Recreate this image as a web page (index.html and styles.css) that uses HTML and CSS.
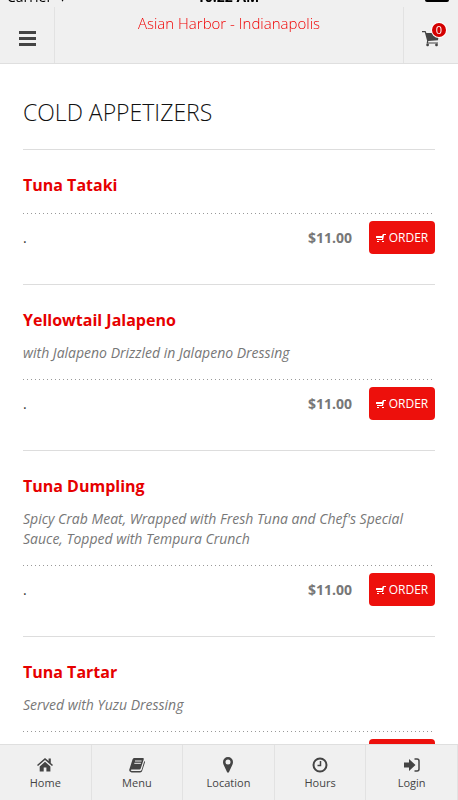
FILE: index.html
```html
<!DOCTYPE html>
<html lang="en">
<head>
    <meta charset="UTF-8">
    <meta name="viewport" content="width=device-width, initial-scale=1.0">
    <title>Asian Harbor - Indianapolis</title>
    <link rel="stylesheet" href="styles.css">
</head>
<body>
    <!-- Shared icon shapes -->
    <svg class="sprite" aria-hidden="true">
        <symbol id="icon-order" viewBox="0 0 10 10">
            <path d="M0 3h6.500L7 1h3v1H8L7 7H1V6h5V5H.5z"/>
            <path d="M.5 3.500v1.500M7 1.500 6.500 6.500" class="icon-line icon-thin"/>
            <rect x="1" y="8" width="2" height="1"/>
            <rect x="6" y="8" width="2" height="1"/>
        </symbol>
    </svg>

    <header class="top">
        <div class="status-bar">
            <span>Carrier &nbsp;▾</span>
            <strong>10:22 AM</strong>
            <span class="battery"></span>
        </div>
        <div class="header-bar">
            <button class="header-button menu-button" type="button" aria-label="Open menu">
                <svg width="17" height="16" viewBox="0 0 17 16"><path d="M0 1h17v3H0zM0 7h17v3H0zM0 13h17v3H0z"/></svg>
            </button>
            <h1 class="restaurant">Asian Harbor - Indianapolis</h1>
            <button class="header-button cart-button" type="button" aria-label="Cart">
                <span class="cart">
                    <svg width="18" height="17" viewBox="0 0 18 17">
                        <path d="M0 1h3.600l.8 2H17l-1 7.200L6.300 11l-.3 1.400h10v1.200H4.600l.5-2.800L2.800 2.300H0z"/>
                        <rect x="4.300" y="13.600" width="2.600" height="2.600" rx="1"/>
                        <rect x="13.200" y="13.600" width="2.600" height="2.600" rx="1"/>
                    </svg>
                    <span class="cart-count">0</span>
                </span>
            </button>
        </div>
    </header>

    <main class="content">
        <h2 class="category">COLD APPETIZERS</h2>

        <article class="item">
            <h3 class="item-name">Tuna Tataki</h3>
            <div class="item-row">
                <span class="item-size">.</span>
                <span class="item-price">$11.00</span>
                <button class="order-button" type="button"><svg width="10" height="10"><use href="#icon-order"/></svg>ORDER</button>
            </div>
        </article>

        <article class="item">
            <h3 class="item-name">Yellowtail Jalapeno</h3>
            <p class="item-description">with Jalapeno Drizzled in Jalapeno Dressing</p>
            <div class="item-row">
                <span class="item-size">.</span>
                <span class="item-price">$11.00</span>
                <button class="order-button" type="button"><svg width="10" height="10"><use href="#icon-order"/></svg>ORDER</button>
            </div>
        </article>

        <article class="item">
            <h3 class="item-name">Tuna Dumpling</h3>
            <p class="item-description">Spicy Crab Meat, Wrapped with Fresh Tuna and Chef's Special Sauce, Topped with Tempura Crunch</p>
            <div class="item-row">
                <span class="item-size">.</span>
                <span class="item-price">$11.00</span>
                <button class="order-button" type="button"><svg width="10" height="10"><use href="#icon-order"/></svg>ORDER</button>
            </div>
        </article>

        <article class="item">
            <h3 class="item-name">Tuna Tartar</h3>
            <p class="item-description">Served with Yuzu Dressing</p>
            <div class="item-row">
                <span class="item-size">.</span>
                <span class="item-price">$11.00</span>
                <button class="order-button" type="button"><svg width="10" height="10"><use href="#icon-order"/></svg>ORDER</button>
            </div>
        </article>
    </main>

    <nav class="tabs">
        <a class="tab" href="#home">
            <svg width="16" height="16" viewBox="0 0 16 16">
                <path d="M8 4.800 13.400 9.500v5h-4v-4H6.700v4h-4v-5z"/>
                <path d="M8 1 0 8l1 1.100 7-6 7 6L16 8l-2.200-2V1.500h-2.200V4z"/>
            </svg>
            Home
        </a>
        <a class="tab" href="#menu">
            <svg width="16" height="16" viewBox="0 0 16 16">
                <path d="M5.500 1h8.200c.9 0 1.300.6 1 1.400l-3 9.100c-.2.7-.8 1-1.500 1H3c-.8 0-1.300.3-1.200.8.1.4.5.6 1.100.6h8.500c.6 0 1-.3 1.200-.8L15.300 4c.6.3.8.8.6 1.500l-2.700 8.300c-.3.9-1.100 1.600-2.100 1.600H2.600C1 15.400-.1 14 .3 12.500L3.500 2.500C3.800 1.600 4.500 1 5.500 1z"/>
                <path d="M6 4h6.600M5.300 6.300h6.600" class="icon-gap"/>
            </svg>
            Menu
        </a>
        <a class="tab" href="#location">
            <svg width="16" height="16" viewBox="0 0 16 16">
                <path fill-rule="evenodd" d="M8 0a5 5 0 0 0-5 5c0 1 .2 1.700.5 2.400l3.500 7.700c.4.900 1.600.900 2 0l3.500-7.700c.3-.7.5-1.400.5-2.400a5 5 0 0 0-5-5zm0 2.500a2.500 2.500 0 1 1 0 5 2.500 2.500 0 0 1 0-5z"/>
            </svg>
            Location
        </a>
        <a class="tab" href="#hours">
            <svg width="16" height="16" viewBox="0 0 16 16">
                <circle cx="8" cy="8" r="6.500" class="icon-line icon-thick"/>
                <path d="M8.500 4v4.500H5.500" class="icon-line"/>
            </svg>
            Hours
        </a>
        <a class="tab" href="#login">
            <svg width="16" height="16" viewBox="0 0 16 16">
                <path d="M0 5.500h5V2l6.500 6L5 14v-3.500H0z"/>
                <path d="M10.500 2H13c1.200 0 2 .8 2 2v8c0 1.200-.8 2-2 2h-2.500" class="icon-line"/>
            </svg>
            Login
        </a>
    </nav>
</body>
</html>
```
FILE: styles.css
```css
* {
    box-sizing: border-box;
}

body {
    margin: 0;
    padding: 64px 0 56px;
    background: #fff;
    color: #333;
    font-family: "Open Sans", "Noto Sans", sans-serif;
    font-size: 14px;
    line-height: 20px;
}

button {
    border: 0;
    font: inherit;
    cursor: pointer;
}

svg {
    fill: currentColor;
}

.sprite {
    position: absolute;
    width: 0;
    height: 0;
}

/* Header */
.top {
    position: fixed;
    top: 0;
    left: 0;
    right: 0;
    z-index: 1;
    background: #f0f0f0;
    border-bottom: 1px solid #dfdfdf;
}

/* Pulled up so that it is mostly off screen */
.status-bar {
    display: grid;
    grid-template-columns: 1fr auto 1fr;
    align-items: start;
    height: 20px;
    margin-top: -13px;
    padding: 0 9px 0 7px;
    color: #000;
    font-size: 14px;
    line-height: 20px;
}

.battery {
    justify-self: end;
    width: 24px;
    height: 10px;
    margin-top: 5px;
    border-radius: 2px;
    background: #000;
}

.header-bar {
    display: flex;
    height: 56px;
}

.header-button {
    display: flex;
    align-items: center;
    justify-content: center;
    width: 55px;
    padding: 6px 0 0;
    background: none;
    color: #444;
}

.menu-button {
    border-right: 1px solid #e2e2e2;
}

.cart-button {
    border-left: 1px solid #e2e2e2;
}

.restaurant {
    flex: 1;
    margin: 0;
    padding-top: 6px;
    color: #f00000;
    font-size: 15px;
    font-weight: 300;
    line-height: 20px;
    text-align: center;
}

.cart {
    position: relative;
    display: flex;
}

.cart-count {
    position: absolute;
    top: -7px;
    right: -6px;
    width: 14px;
    height: 14px;
    border-radius: 50%;
    background: #d40000;
    box-shadow: 0 0 0 1px #fff;
    color: #fff;
    font-size: 11px;
    line-height: 14px;
    text-align: center;
}

/* Menu items */
.content {
    padding: 0 23px;
}

.category {
    margin: 0;
    padding: 32px 0 21px;
    color: #111;
    font-size: 23px;
    font-weight: 300;
    line-height: 32px;
}

.item {
    padding: 23px 0 30px;
    border-top: 1px solid #ddd;
}

.item-name {
    margin: 0;
    color: #e60000;
    font-size: 16px;
    font-weight: 700;
    line-height: 24px;
}

.item-description {
    margin: 11px 0 0;
    color: #777;
    font-style: italic;
}

.item-row {
    display: flex;
    align-items: center;
    gap: 17px;
    margin-top: 16px;
    padding-top: 8px;
    background: linear-gradient(to right, #999 1px, transparent 1px) 0 0 / 4px 1px repeat-x;
}

.item-size {
    flex: 1;
}

.item-price {
    color: #777;
    font-weight: 700;
}

.order-button {
    display: flex;
    align-items: center;
    justify-content: center;
    gap: 3px;
    height: 33px;
    width: 66px;
    padding: 0;
    border-radius: 4px;
    background: #ed100c;
    color: #fff;
    font-size: 12px;
}

/* Bottom tabs */
.tabs {
    position: fixed;
    bottom: 0;
    left: 0;
    right: 0;
    display: flex;
    height: 56px;
    background: #f0f0f0;
    border-top: 1px solid #dfdfdf;
}

.tab {
    display: flex;
    flex: 1;
    flex-direction: column;
    align-items: center;
    gap: 2px;
    padding-top: 12px;
    border-right: 1px solid #e2e2e2;
    color: #444;
    font-size: 11px;
    line-height: 16px;
    text-decoration: none;
}

.icon-gap {
    fill: none;
    stroke: #f0f0f0;
    stroke-width: 1;
}

.icon-line {
    fill: none;
    stroke: currentColor;
    stroke-width: 1.5;
}

.icon-thick {
    stroke-width: 2;
}

.icon-thin {
    stroke-width: 1;
}
```
